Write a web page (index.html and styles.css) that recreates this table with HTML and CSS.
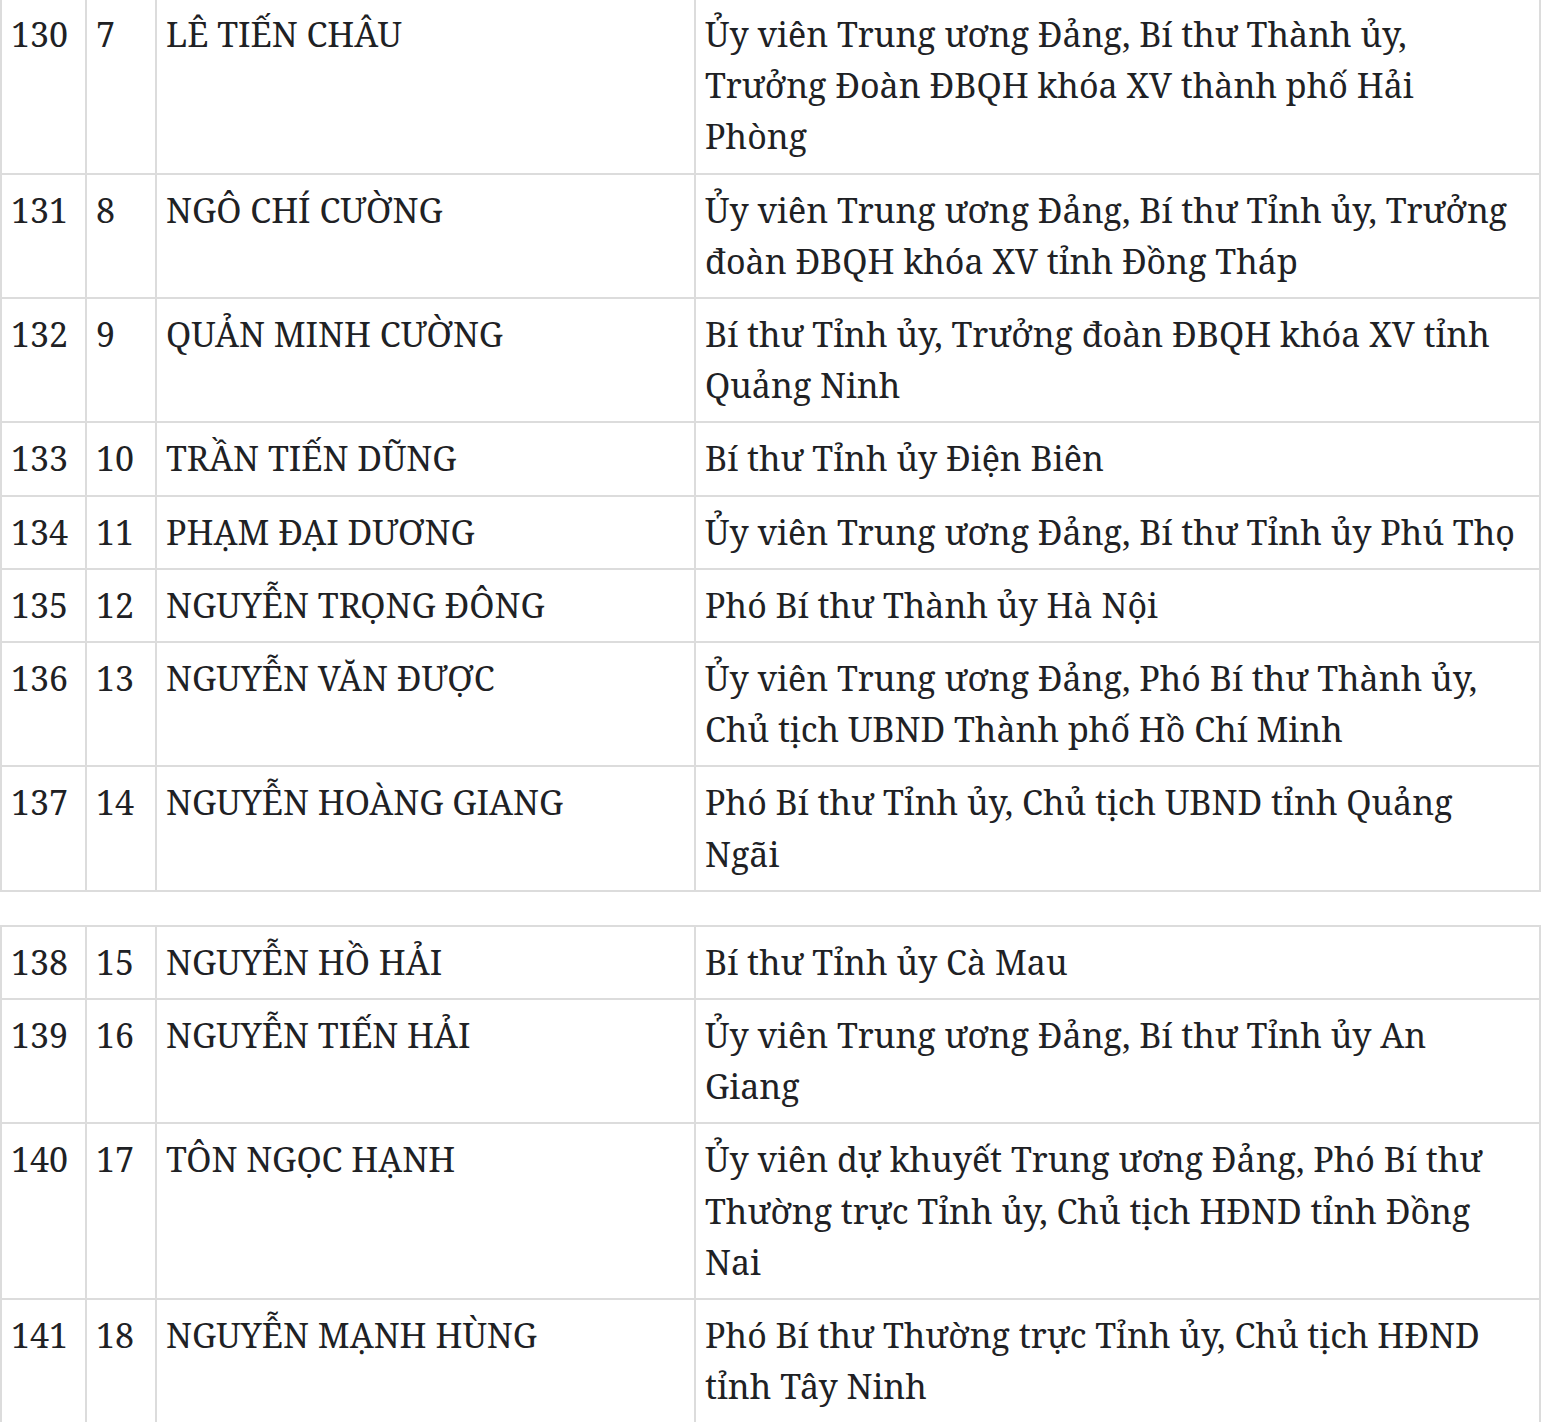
FILE: index.html
```html
<!DOCTYPE html>
<html lang="vi">
<head>
<meta charset="utf-8">
<link rel="stylesheet" href="styles.css">
</head>
<body>
<div class="page">
<table class="list">
  <colgroup><col class="c1"><col class="c2"><col class="c3"><col class="c4"></colgroup>
  <tr><td>130</td><td>7</td><td>LÊ TIẾN CHÂU</td><td>Ủy viên Trung ương Đảng, Bí thư Thành ủy, Trưởng Đoàn ĐBQH khóa XV thành phố Hải Phòng</td></tr>
  <tr><td>131</td><td>8</td><td>NGÔ CHÍ CƯỜNG</td><td>Ủy viên Trung ương Đảng, Bí thư Tỉnh ủy, Trưởng đoàn ĐBQH khóa XV tỉnh Đồng Tháp</td></tr>
  <tr><td>132</td><td>9</td><td>QUẢN MINH CƯỜNG</td><td>Bí thư Tỉnh ủy, Trưởng đoàn ĐBQH khóa XV tỉnh Quảng Ninh</td></tr>
  <tr><td>133</td><td>10</td><td>TRẦN TIẾN DŨNG</td><td>Bí thư Tỉnh ủy Điện Biên</td></tr>
  <tr><td>134</td><td>11</td><td>PHẠM ĐẠI DƯƠNG</td><td>Ủy viên Trung ương Đảng, Bí thư Tỉnh ủy Phú Thọ</td></tr>
  <tr><td>135</td><td>12</td><td>NGUYỄN TRỌNG ĐÔNG</td><td>Phó Bí thư Thành ủy Hà Nội</td></tr>
  <tr><td>136</td><td>13</td><td>NGUYỄN VĂN ĐƯỢC</td><td>Ủy viên Trung ương Đảng, Phó Bí thư Thành ủy, Chủ tịch UBND Thành phố Hồ Chí Minh</td></tr>
  <tr><td>137</td><td>14</td><td>NGUYỄN HOÀNG GIANG</td><td>Phó Bí thư Tỉnh ủy, Chủ tịch UBND tỉnh Quảng Ngãi</td></tr>
</table>
<table class="list second">
  <colgroup><col class="c1"><col class="c2"><col class="c3"><col class="c4"></colgroup>
  <tr><td>138</td><td>15</td><td>NGUYỄN HỒ HẢI</td><td>Bí thư Tỉnh ủy Cà Mau</td></tr>
  <tr><td>139</td><td>16</td><td>NGUYỄN TIẾN HẢI</td><td>Ủy viên Trung ương Đảng, Bí thư Tỉnh ủy An Giang</td></tr>
  <tr><td>140</td><td>17</td><td>TÔN NGỌC HẠNH</td><td>Ủy viên dự khuyết Trung ương Đảng, Phó Bí thư Thường trực Tỉnh ủy, Chủ tịch HĐND tỉnh Đồng Nai</td></tr>
  <tr><td>141</td><td>18</td><td>NGUYỄN MẠNH HÙNG</td><td>Phó Bí thư Thường trực Tỉnh ủy, Chủ tịch HĐND tỉnh Tây Ninh</td></tr>
</table>
</div>
</body>
</html>
```

FILE: styles.css
```css
html, body {
  margin: 0;
  padding: 0;
  background: #ffffff;
}
body {
  font-family: "Noto Serif", "DejaVu Serif", "Liberation Serif", serif;
  font-size: 34px;
  line-height: 51.2px;
  color: #202124;
}
.page {
  margin-top: -3px;
}
.list {
  border-collapse: collapse;
  width: 1539px;
  table-layout: fixed;
}
.list.second {
  margin-top: 33px;
}
.c1 { width: 85px; }
.c2 { width: 70px; }
.c3 { width: 539px; }
.c4 { width: 845px; }
.list td {
  border: 2px solid #dcdcdc;
  padding: 10px 16px 10px 9px;
  vertical-align: top;
}
```
